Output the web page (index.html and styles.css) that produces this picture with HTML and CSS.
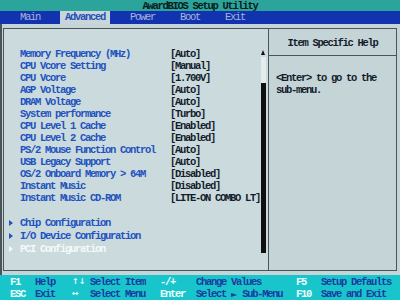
FILE: index.html
```html
<!DOCTYPE html>
<html lang="en">
<head>
    <meta charset="UTF-8">
    <title>AwardBIOS Setup Utility</title>
    <link rel="stylesheet" href="styles.css">
</head>
<body>
    <div class="screen">
        <div class="title">AwardBIOS Setup Utility</div>
        <div class="menu">
            <span class="tab">Main</span>
            <span class="tab active">Advanced</span>
            <span class="tab">Power</span>
            <span class="tab">Boot</span>
            <span class="tab">Exit</span>
        </div>
        <div class="body">
            <div class="frame">
                <div class="left-panel">
                    <div class="list">
                        <div class="row"><span class="name">Memory Frequency (MHz)</span><span class="value">[Auto]</span></div>
                        <div class="row"><span class="name">CPU Vcore Setting</span><span class="value">[Manual]</span></div>
                        <div class="row"><span class="name">CPU Vcore</span><span class="value">[1.700V]</span></div>
                        <div class="row"><span class="name">AGP Voltage</span><span class="value">[Auto]</span></div>
                        <div class="row"><span class="name">DRAM Voltage</span><span class="value">[Auto]</span></div>
                        <div class="row"><span class="name">System performance</span><span class="value">[Turbo]</span></div>
                        <div class="row"><span class="name">CPU Level 1 Cache</span><span class="value">[Enabled]</span></div>
                        <div class="row"><span class="name">CPU Level 2 Cache</span><span class="value">[Enabled]</span></div>
                        <div class="row"><span class="name">PS/2 Mouse Function Control</span><span class="value">[Auto]</span></div>
                        <div class="row"><span class="name">USB Legacy Support</span><span class="value">[Auto]</span></div>
                        <div class="row"><span class="name">OS/2 Onboard Memory &gt; 64M</span><span class="value">[Disabled]</span></div>
                        <div class="row"><span class="name">Instant Music</span><span class="value">[Disabled]</span></div>
                        <div class="row"><span class="name">Instant Music CD-ROM</span><span class="value">[LITE-ON COMBO LT]</span></div>
                        <div class="row blank"></div>
                        <div class="row sub"><span class="arrow"></span>Chip Configuration</div>
                        <div class="row sub"><span class="arrow"></span>I/O Device Configuration</div>
                        <div class="row sub selected"><span class="arrow"></span>PCI Configuration</div>
                    </div>
                    <div class="scrollbar">
                        <div class="scroll-up"></div>
                        <div class="scroll-track"></div>
                        <div class="scroll-thumb"></div>
                    </div>
                </div>
                <div class="help-panel">
                    <div class="help-title">Item Specific Help</div>
                    <div class="help-text">&lt;Enter&gt; to go to the<br>sub-menu.</div>
                </div>
            </div>
        </div>
        <div class="footer">
            <span class="key">F1</span><span class="desc">Help</span>
            <span class="key glyph">&uarr;&darr;</span><span class="desc">Select Item</span>
            <span class="key">-/+</span><span class="desc">Change Values</span>
            <span class="key">F5</span><span class="desc">Setup Defaults</span>
            <span class="key">ESC</span><span class="desc">Exit</span>
            <span class="key glyph">&harr;</span><span class="desc">Select Menu</span>
            <span class="key">Enter</span><span class="desc">Select <span class="glyph">&#9658;</span> Sub-Menu</span>
            <span class="key">F10</span><span class="desc">Save and Exit</span>
        </div>
    </div>
</body>
</html>
```

FILE: styles.css
```css
body {
    margin: 0;
    padding: 0;
    background-color: #c4d4d7;
    font-family: "Liberation Mono", "DejaVu Sans Mono", monospace;
    font-size: 10.5px;
    font-weight: bold;
    letter-spacing: -1.3px;
    line-height: 12px;
}
.screen {
    width: 400px;
    height: 300px;
    overflow: hidden;
    box-shadow: inset 2px 0 0 #4a5458;
}
.title {
    height: 11px;
    background-color: #2ba59c;
    color: #0a1a1a;
    text-align: center;
}
.menu {
    display: flex;
    gap: 15px;
    height: 13px;
    padding-left: 15px;
    background-color: #1233b0;
    color: #a8b4d8;
    font-weight: normal;
}
.tab {
    padding: 0 5px;
    line-height: 13px;
}
.tab.active {
    background-color: #c9d5d8;
    color: #2450b8;
    font-weight: bold;
}
.body {
    padding: 4px 3px 4px 3px;
}
.frame {
    display: flex;
    height: 241px;
    border: 1px solid #4b5559;
}
.left-panel {
    display: flex;
    width: 264px;
    background-color: #cadadd;
}
.list {
    flex: 1;
    padding: 19px 0 0 16px;
}
.row {
    display: flex;
    height: 12px;
    color: #2352c0;
    white-space: nowrap;
}
.name {
    width: 150px;
}
.value {
    color: #141c2c;
}
.sub {
    padding-top: 1px;
}
.arrow {
    display: inline-block;
    width: 0;
    height: 0;
    margin: 3px 7px 0 -11px;
    border-left: 4px solid #2352c0;
    border-top: 3px solid transparent;
    border-bottom: 3px solid transparent;
}
.selected {
    color: #f4fafa;
}
.selected .arrow {
    border-left-color: #f4fafa;
}
.scrollbar {
    width: 5px;
    margin: 19px 2px 0 0;
}
.scroll-up {
    width: 0;
    height: 0;
    margin-top: 2px;
    margin-bottom: 2px;
    border-bottom: 5px solid #101010;
    border-left: 2.5px solid transparent;
    border-right: 2.5px solid transparent;
}
.scroll-track {
    height: 26px;
    background-color: #e4ecee;
}
.scroll-thumb {
    height: 170px;
    background-color: #101010;
}
.help-panel {
    flex: 1;
    border-left: 1px solid #4b5559;
}
.help-title {
    height: 18px;
    padding-top: 8px;
    border-bottom: 1px solid #4b5559;
    color: #141c2c;
    text-align: center;
}
.help-text {
    padding: 16px 0 0 7px;
    color: #141c2c;
}
.footer {
    display: grid;
    grid-template-columns: 25px 37px 18px 70px 36px 100px 25px auto;
    grid-auto-rows: 12px;
    height: 24px;
    padding: 1px 0 0 10px;
    background-color: #17c5cb;
    white-space: nowrap;
}
.key {
    color: #f0ffff;
}
.desc {
    color: #1b3aa0;
}
.glyph {
    font-family: "DejaVu Sans", sans-serif;
    font-size: 8px;
    letter-spacing: 0;
}
```
